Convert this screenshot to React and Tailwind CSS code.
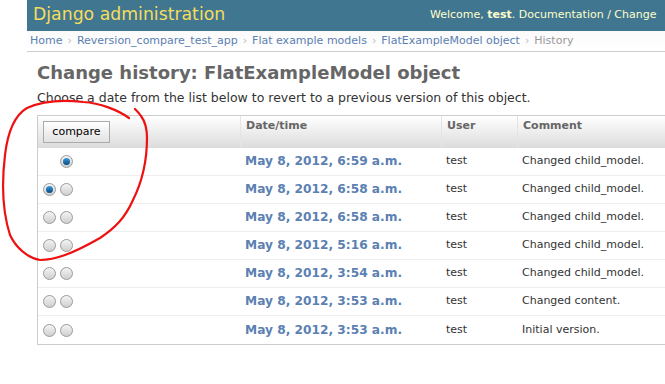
const rows = [
  { date: "May 8, 2012, 6:59 a.m.", comment: "Changed child_model.", first: true },
  { date: "May 8, 2012, 6:58 a.m.", comment: "Changed child_model.", left: true },
  { date: "May 8, 2012, 6:58 a.m.", comment: "Changed child_model." },
  { date: "May 8, 2012, 5:16 a.m.", comment: "Changed child_model." },
  { date: "May 8, 2012, 3:54 a.m.", comment: "Changed child_model." },
  { date: "May 8, 2012, 3:53 a.m.", comment: "Changed content." },
  { date: "May 8, 2012, 3:53 a.m.", comment: "Initial version." },
];

const Radio = ({ checked }) => (
  <span className="w-[13px] h-[13px] rounded-full border border-[#9a9a9a] bg-gradient-to-b from-[#f4f4f4] to-[#cfcfcf] flex items-center justify-center">
    {checked && (
      <span className="w-[7px] h-[7px] rounded-full bg-gradient-to-b from-[#3b9be0] to-[#064a80]"></span>
    )}
  </span>
);

const App = () => {
  return (
    <div className="relative w-[665px] h-[384px] overflow-hidden bg-white font-['DejaVu_Sans',Verdana,sans-serif]">
      <div className="ml-[27px] w-[700px]">
        <div className="h-[31px] bg-[#417690] flex items-center overflow-hidden">
          <div className="w-[403px] shrink-0 pl-[6px] text-[17.3px] text-[#f5dd5d] leading-none pb-[1px]">Django administration</div>
          <div className="text-[11px] text-[#ffc] whitespace-nowrap pb-[1px]">
            Welcome, <b>test</b>. Documentation / Change
          </div>
        </div>
        <div className="h-[21px] flex items-center pl-[3px] text-[11px] text-[#999] bg-gradient-to-b from-[#fafafa] to-white border-b border-[#ccc] whitespace-nowrap">
          <span className="text-[#5b80b2]">Home</span>
          <span className="mx-[5px] text-[#bbb]">›</span>
          <span className="text-[#5b80b2]">Reversion_compare_test_app</span>
          <span className="mx-[5px] text-[#bbb]">›</span>
          <span className="text-[#5b80b2]">Flat example models</span>
          <span className="mx-[5px] text-[#bbb]">›</span>
          <span className="text-[#5b80b2]">FlatExampleModel object</span>
          <span className="mx-[5px] text-[#bbb]">›</span>
          <span>History</span>
        </div>
        <div className="pl-[10px]">
          <h1 className="mt-[10px] text-[18px] font-bold text-[#666] leading-[22px]">Change history: FlatExampleModel object</h1>
          <p className="mt-[6px] text-[12.5px] text-[#333] leading-[15px]">Choose a date from the list below to revert to a previous version of this object.</p>
          <div className="mt-[10px] border border-[#ccc] border-r-0">
            <div className="flex h-[32px] bg-gradient-to-b from-white to-[#dcdcdc] text-[11px] font-bold text-[#666]">
              <div className="w-[202px] pl-[5px] pt-[5px]">
                <div className="w-[67px] h-[22px] border border-[#aaa] bg-gradient-to-b from-white to-[#e2e2e2] text-[11px] font-normal text-black flex items-center justify-center">compare</div>
              </div>
              <div className="w-[201px] pl-[5px] pt-[2px] border-l border-[#e4e4e4]">Date/time</div>
              <div className="w-[76px] pl-[5px] pt-[2px] border-l border-[#e4e4e4]">User</div>
              <div className="flex-1 pl-[5px] pt-[2px] border-l border-[#e4e4e4]">Comment</div>
            </div>
            {rows.map((r, i) => (
              <div key={i} className={"flex h-[28px] items-center " + (i < rows.length - 1 ? "border-b border-[#eee]" : "")}>
                <div className="w-[202px] pl-[5px] flex gap-[4px]">
                  {r.first ? <span className="w-[13px]"></span> : <Radio checked={r.left} />}
                  <Radio checked={r.first} />
                </div>
                <div className="w-[201px] pl-[5px] text-[12.2px] font-bold text-[#5b80b2]">{r.date}</div>
                <div className="w-[76px] pl-[5px] text-[11px] text-[#333]">test</div>
                <div className="flex-1 pl-[5px] text-[11px] text-[#333]">{r.comment}</div>
              </div>
            ))}
          </div>
        </div>
      </div>
      <svg className="absolute left-0 top-0" width="665" height="384" fill="none" stroke="#ee1111" strokeWidth="2.2" strokeLinecap="round">
        <path d="M129 118 C118 110 100 103 83 102 C65 100 45 100 27 108 C15 115 8 130 5 155 C2 180 2 210 10 235 C16 248 28 258 40 260 C55 260 72 254 100 238 C115 228 125 218 133 200 C142 182 147 160 147 138 C147 128 144 120 141 116 C139 113 137 111 135 109" />
      </svg>
    </div>
  );
};

export default App;
